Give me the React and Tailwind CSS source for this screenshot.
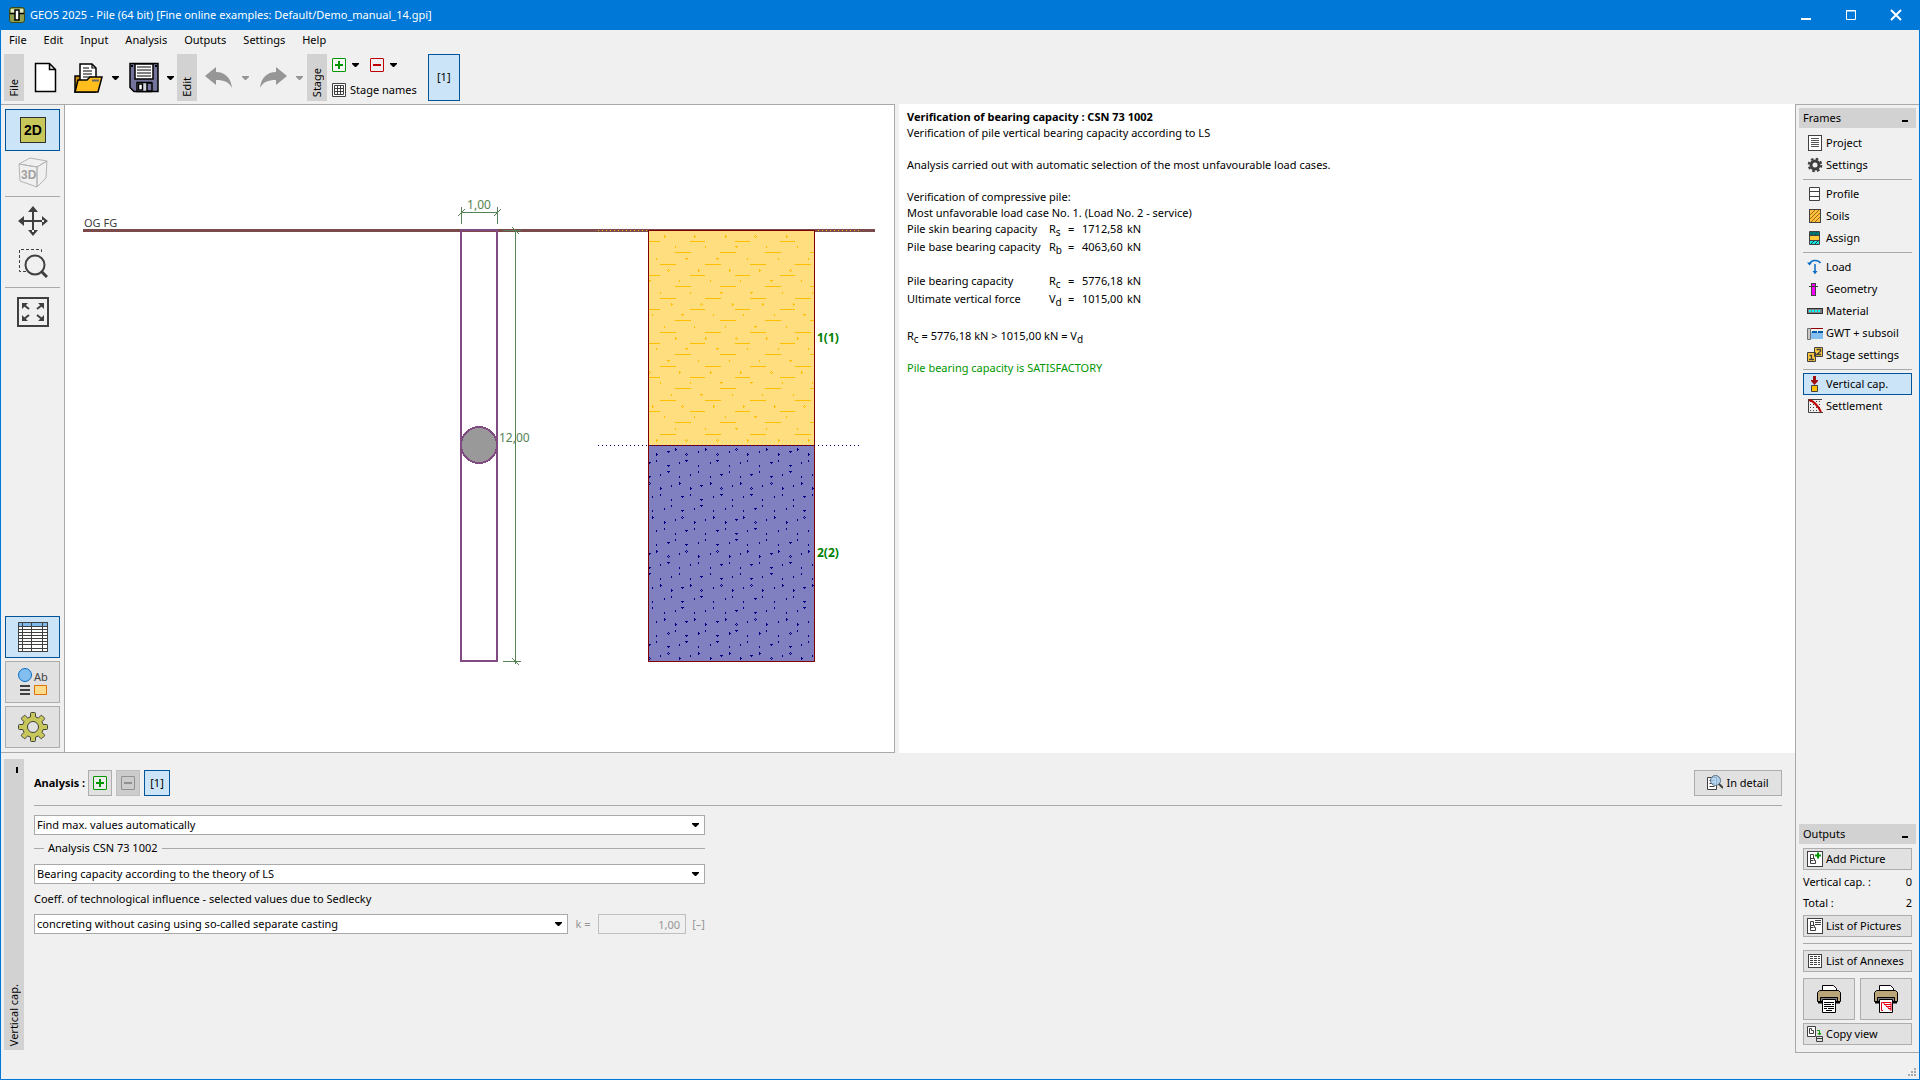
import React, { useState } from 'react';

const FONT = "font-['Noto_Sans','Open_Sans',sans-serif]";

// [row y, first x] of the dot rows, x repeats every ~30px
const CLAY_STARTS = [16, 27, 8, 20, 1, 12, 23, 4];
const SAND_ROWS = [
    [88, 27, 1], [95, 20], [103, 8, 1], [122, 8], [128, 1], [137, 20], [155, 20], [164, 12], [170, 1], [190, 1, 1],
    [197, 23], [205, 12, 1], [224, 12], [230, 4], [239, 23], [257, 23], [266, 16], [272, 4], [292, 4, 1], [299, 27],
    [307, 16, 1], [326, 16], [332, 8], [341, 27], [359, 27], [368, 20], [374, 8], [394, 8, 1], [401, 1], [409, 20, 1],
    [428, 20], [434, 12], [443, 1], [461, 1], [470, 23], [476, 12], [496, 12, 1], [503, 4], [511, 23, 1], [530, 23],
    [536, 16], [545, 4], [563, 4], [572, 27], [578, 16], [598, 16, 1], [605, 8], [613, 27, 1], [632, 27], [640, 20, 1],
    [647, 8], [665, 8], [674, 1], [680, 20], [700, 20, 1], [707, 12], [715, 1, 1],
];
const WIDE_COLUMNS = [1, 20, 35, 39, 54, 69, 73, 88, 103, 107, 122, 141, 156];

const dotPath = (x, y, big, wide) => {
    if (big && wide) return `M${x} ${y - 1}h1v1h-1zM${x - 1} ${y}h1v1h-1zM${x + 1} ${y}h1v1h-1zM${x} ${y + 1}h1v1h-1z`;
    if (big) return `M${x} ${y - 1}h1v3h-1zM${x + 1} ${y}h1v1h-1z`;
    if (wide) return `M${x - 1} ${y - 1}h3v1h-3zM${x} ${y}h1v1h-1z`;
    return `M${x} ${y - 1}h1v2h-1z`;
};

// x is measured from the left edge of the soil column
const rowPath = (y, start, big) => {
    let d = '';
    for (let n = 0; n < 6; n++) {
        const x = start + Math.round(n * 30.4);
        const wide = WIDE_COLUMNS.some((w) => Math.abs(w - x) < 2);
        if (x < 166) d += dotPath(648 + x, y, big, wide);
    }
    return d;
};

const CLAY_DOTS = Array.from({ length: 19 }, (_, k) =>
    rowPath(Math.round(236 + k * 11.33), CLAY_STARTS[k % 8], k % 3 === 0)
).join('');
const SAND_DOTS = SAND_ROWS.map(([y, x, big]) => rowPath(420 + Math.round(y / 3), x, big)).join('');

const Caret = ({ className = '' }) => (
    <svg width="7" height="4" viewBox="0 0 7 4" className={`shrink-0 ${className}`} fill="currentColor">
        <path d="M0 0h7v1L4 4H3L0 1z" />
    </svg>
);

const PlusBox = ({ color = '#009600' }) => (
    <svg width="14" height="14" viewBox="0 0 14 14" fill="none" stroke={color}>
        <rect x=".5" y=".5" width="13" height="13" rx=".5" fill="#fff" fillOpacity=".4" />
        <path d="M3 7h8M7 3v8" strokeWidth="2" />
    </svg>
);

const MinusBox = ({ color = '#c00000' }) => (
    <svg width="14" height="14" viewBox="0 0 14 14" fill="none" stroke={color}>
        <rect x=".5" y=".5" width="13" height="13" rx=".5" />
        <path d="M3 7h8" strokeWidth="2" />
    </svg>
);

const PictureIcon = ({ children }) => (
    <svg width="16" height="16" viewBox="0 0 16 16" fill="none" stroke="#404040">
        <rect x=".5" y=".5" width="15" height="15" fill="#fff" />
        <path d="M3.500 12.500V3.500h3v4M3.500 7.500h4v2h1v3h-5M3.500 9.500h3" />
        {children}
    </svg>
);

const ICONS = {
    project: (
        <svg width="16" height="16" viewBox="0 0 16 16" fill="none" stroke="#404040">
            <rect x="1.500" y=".5" width="13" height="15" fill="#fff" />
            <path d="M4 3.500h8M4 5.500h8M4 7.500h8M4 9.500h8M4 11.500h8" stroke="#555" />
        </svg>
    ),
    settings: (
        <svg width="16" height="16" viewBox="0 0 16 16" fill="none" stroke="#404040">
            <circle cx="8" cy="8" r="4" strokeWidth="3" />
            <circle cx="8" cy="8" r="6.300" strokeWidth="2" strokeDasharray="2.600 2.350" />
        </svg>
    ),
    profile: (
        <svg width="16" height="16" viewBox="0 0 16 16" fill="#fff" stroke="#404040">
            <path d="M2.500 1.500h10v13h-10zM2.500 5.500h10M2.500 10.500h10" />
        </svg>
    ),
    soils: (
        <svg width="16" height="16" viewBox="0 0 16 16" stroke="#404040">
            <rect x="2.500" y="1.500" width="11" height="13" fill="#ffbe3c" />
            <path d="M3 7l5-5M3 11l9-9M4 14l9-9M8 14l5-5" stroke="#9a6a10" />
        </svg>
    ),
    assign: (
        <svg width="16" height="16" viewBox="0 0 16 16">
            <path fill="#007a78" d="M3 2h10v4H3z" />
            <path fill="#ffc83c" d="M3 6h10v4H3z" />
            <path fill="#1ee0e0" d="M3 10h10v4H3z" />
            <path d="M2.500 1.500h10v13h-10zM3 5.500h10M3 10.500h10" fill="none" stroke="#404040" />
            <path d="M4 14l3-3M8 14l3-3M4 5l2-3M8 5l2-3" stroke="#00504e" />
        </svg>
    ),
    load: (
        <svg width="16" height="16" viewBox="0 0 16 16" fill="none" stroke="#0a6cc4" strokeWidth="1.500">
            <path d="M2.500 5C4 .5 11 .3 13.500 4M8 5v9" />
            <path d="M0 3.500h5L2.500 6.500zM5.500 12h5L8 15.200z" fill="#0a6cc4" stroke="none" />
        </svg>
    ),
    geometry: (
        <svg width="16" height="16" viewBox="0 0 16 16" stroke="#404040">
            <rect x="4.500" y="2.500" width="4" height="12" fill="#f0f" />
            <path d="M2 5.500h9" />
        </svg>
    ),
    material: (
        <svg width="16" height="16" viewBox="0 0 16 16">
            <rect x=".5" y="5.500" width="15" height="5" fill="#808080" stroke="#303030" />
            <path d="M2 8h12" stroke="#0ff" strokeWidth="2" strokeDasharray="2 1" />
        </svg>
    ),
    gwt: (
        <svg width="16" height="16" viewBox="0 0 16 16">
            <path fill="#85bff0" d="M4 7h12v7H4z" />
            <path d="M.5 3.500h3v11h-3z" fill="#c8c8c8" stroke="#707070" />
            <path d="M4 3.500h12" stroke="#900000" />
            <path d="M5 7h11" stroke="#005aaa" strokeWidth="2" strokeDasharray="5 1" />
        </svg>
    ),
    stages: (
        <svg width="16" height="16" viewBox="0 0 16 16" stroke="#404040">
            <path d="M.5 5.500h8v9h-8zM7.500 .5h8v9h-8z" fill="#ffc83c" />
            <path d="M2.500 8.500h2v4M2 12.500h5M9.500 2.500h4v2l-4 3h4.500" fill="none" strokeWidth="1.300" />
        </svg>
    ),
    vertical: (
        <svg width="16" height="16" viewBox="0 0 16 16">
            <path d="M6 0h3v4h2v1L7.500 9 4 5V4h2z" fill="#a01010" />
            <path d="M4.500 9.500h6v6h-6z" fill="#ffc000" stroke="#404040" />
        </svg>
    ),
    settlement: (
        <svg width="16" height="16" viewBox="0 0 16 16" fill="none">
            <path d="M3 3.500h12M3 6.500h12M3 9.500h12M3 12.500h12" stroke="#404040" strokeDasharray="1 2" />
            <path d="M1.500 1v13.500H16M2 1.500h13" stroke="#404040" />
            <path d="M2 2c5 1 8 4 12 12" stroke="#c00000" strokeWidth="2" />
        </svg>
    ),
    table: (
        <svg width="14" height="14" viewBox="0 0 14 14" fill="none" stroke="#404040">
            <path d="M.5 .5h13v13H.5z" fill="#fff" />
            <path d="M2.500 2.500h9v9h-9zM5.500 3v9M8.500 3v9M3 5.500h9M3 8.500h9" />
        </svg>
    ),
    addPicture: (
        <PictureIcon>
            <path d="M8 4.500h6M11 1.500v6" stroke="#009600" strokeWidth="2" />
        </PictureIcon>
    ),
    listPictures: (
        <PictureIcon>
            <path d="M8 2.500h6M8 4.500h6M8 6.500h6" />
        </PictureIcon>
    ),
    annexes: (
        <svg width="16" height="16" viewBox="0 0 16 16" fill="none" stroke="#404040">
            <rect x="1.500" y="1.500" width="13" height="13" fill="#fff" />
            <path d="M3 3.500h10M3 5.500h10M3 7.500h10M3 9.500h10M3 11.500h10" strokeDasharray="3 1" />
        </svg>
    ),
    copy: (
        <svg width="16" height="16" viewBox="0 0 16 16" fill="none" stroke="#404040">
            <path d="M.5 .5h8v10h-8z" fill="#fff" />
            <path d="M2.500 7.500v-5h2v2h2v3h-4M9.500 10.500h6v5h-6zM9.500 12.500h6" />
            <path d="M10 4.500h2.500V9M11 7l1.500 2L14 7" stroke="#009600" />
        </svg>
    ),
};

const FRAME_GROUPS = [
    [['project', 'Project'], ['settings', 'Settings']],
    [['profile', 'Profile'], ['soils', 'Soils'], ['assign', 'Assign']],
    [['load', 'Load'], ['geometry', 'Geometry'], ['material', 'Material'], ['gwt', 'GWT + subsoil'], ['stages', 'Stage settings']],
    [['vertical', 'Vertical cap.'], ['settlement', 'Settlement']],
];

const MENU = ['File', 'Edit', 'Input', 'Analysis', 'Outputs', 'Settings', 'Help'];

const TitleBar = () => (
    <header className="h-[30px] shrink-0 bg-[#0078d7] text-white flex items-center pl-2">
        <svg width="16" height="16" viewBox="0 0 16 16" className="mr-[5px]">
            <rect x=".5" y=".5" width="15" height="15" rx="2.500" fill="#8f9f50" stroke="#3c4a18" />
            <path d="M2 2h12v5H2z" fill="#dfe6c0" />
            <path d="M1 6.500h14" stroke="#000" strokeWidth="1.500" />
            <path d="M6 3h4v10H6z" fill="#fff" stroke="#000" strokeWidth="1.500" />
        </svg>
        <h1>GEO5 2025 - Pile (64 bit) [Fine online examples: Default/Demo_manual_14.gpi]</h1>
        <div className="ml-auto mr-px flex">
            <button aria-label="Minimize" className="w-[45px] h-[30px] grid place-items-center">
                <svg width="12" height="12" viewBox="0 0 12 12" fill="none" stroke="#fff">
                    <path d="M1 10h10" strokeWidth="2" />
                </svg>
            </button>
            <button aria-label="Maximize" className="w-[45px] h-[30px] grid place-items-center">
                <svg width="12" height="12" viewBox="0 0 12 12" fill="none" stroke="#fff">
                    <path d="M1.500 1.500h9v9h-9zM1 2h10" />
                </svg>
            </button>
            <button aria-label="Close" className="w-[45px] h-[30px] grid place-items-center">
                <svg width="12" height="12" viewBox="0 0 12 12" fill="none" stroke="#fff">
                    <path d="M1 1l10 10M11 1L1 11" strokeWidth="2" />
                </svg>
            </button>
        </div>
    </header>
);

const GroupTab = ({ children, className = '' }) => (
    <div className={`w-5 shrink-0 bg-[#d2d2d2] flex items-end justify-center pb-1 ${className}`}>
        <span className="[writing-mode:vertical-rl] rotate-180 leading-4">{children}</span>
    </div>
);

const Toolbar = () => (
    <div className="flex h-[47px] mt-1 pl-[3px] shrink-0">
        <GroupTab>File</GroupTab>
        <button aria-label="New" className="ml-[10px] self-center">
            <svg width="24" height="32" viewBox="0 0 24 32" fill="#fff" stroke="#000" strokeWidth="1.500">
                <path d="M1.500 1.500h14l6 6v22h-20zM15.500 1.500v6h6" />
            </svg>
        </button>
        <button aria-label="Open" className="ml-4 self-center flex items-center gap-2">
            <svg width="30" height="32" viewBox="0 0 30 32" strokeWidth="1.500" stroke="#000">
                <path d="M1 14h6l2 2h12v14H1z" fill="#c88a00" />
                <path d="M6 2h12l4 4v14H6z" fill="#fff" />
                <path d="M18 2v4h4M9 6h6M9 9h9M9 12h9M9 15h9" fill="none" strokeWidth="1.200" />
                <path d="M4 18h9l3-3h12l-4 15H1z" fill="#ffbe1e" />
                <path d="M18 18.500h7" stroke="#666" strokeWidth="2" />
            </svg>
            <Caret />
        </button>
        <button aria-label="Save" className="ml-[10px] self-center flex items-center gap-2">
            <svg width="30" height="32" viewBox="0 0 30 32" stroke="#000" strokeWidth="1.500">
                <path d="M1 1.500h28v28H5l-4-4z" fill="#73739b" />
                <path d="M6 2h18v15H6z" fill="#fff" />
                <path d="M8 5h14M8 8h14M8 11h14M8 14h14" strokeWidth="1.200" />
                <path d="M8 20.500h14v9H8z" fill="#d4d4e0" />
                <path d="M9.500 22h4v6h-4z" fill="#fff" />
                <path d="M18 21h5v8h-5z" fill="#73739b" />
                <path d="M2 3h2v2H2zM26 3h2v2h-2z" fill="#000" stroke="none" />
            </svg>
            <Caret />
        </button>
        <GroupTab className="ml-[3px]">Edit</GroupTab>
        <button disabled aria-label="Undo" className="ml-2 self-center flex items-center gap-[9px] text-[#969696]">
            <svg width="28" height="22" viewBox="0 0 28 22" fill="currentColor">
                <path d="M0 9L11 0v5c9 0 15 6 16 16-3-6-8-8-16-8v5z" />
            </svg>
            <Caret />
        </button>
        <button disabled aria-label="Redo" className="ml-[10px] self-center flex items-center gap-[9px] text-[#969696]">
            <svg width="28" height="22" viewBox="0 0 28 22" fill="currentColor">
                <path d="M28 9L17 0v5C8 5 2 11 1 21c3-6 8-8 16-8v5z" />
            </svg>
            <Caret />
        </button>
        <GroupTab className="ml-1">Stage</GroupTab>
        <div className="ml-[5px] flex flex-col justify-between pt-1 pb-[3px]">
            <div className="flex items-center">
                <button aria-label="Add stage" className="flex items-center gap-[6px]"><PlusBox /><Caret /></button>
                <button aria-label="Remove stage" className="ml-[11px] flex items-center gap-[6px]"><MinusBox /><Caret /></button>
            </div>
            <button className="flex items-center gap-1 leading-4">{ICONS.table}Stage names</button>
        </div>
        <button className="ml-[11px] w-8 bg-[#cce4f7] border border-[#005499]">[1]</button>
    </div>
);

const SIDE_ON = 'h-[42px] grid place-items-center bg-[#cce4f7] border border-[#005499]';
const SIDE_OFF = 'h-[42px] grid place-items-center bg-[#e1e1e1] border border-[#adadad]';
const SIDE_PLAIN = 'h-[42px] grid place-items-center';

const ViewBar = () => (
    <nav className="w-[63px] shrink-0 px-1 pt-1 pb-1 flex flex-col">
        <button aria-label="2D view" className={SIDE_ON}>
            <svg width="26" height="26" viewBox="0 0 26 26">
                <rect x=".5" y=".5" width="25" height="25" fill="#c8c85a" stroke="#303030" />
                <text x="13" y="18" textAnchor="middle" fontSize="14" fontWeight="700" fontFamily="Liberation Sans, sans-serif">2D</text>
            </svg>
        </button>
        <button disabled aria-label="3D view" className={SIDE_PLAIN}>
            <svg width="32" height="32" viewBox="0 0 32 32" fill="#f0f0f0" stroke="#b4b4b4">
                <path d="M2 8l11-6 17 3-10 6zM2 8l18 3v20L3 25zM30 5l-10 6v20l9-9z" />
                <text x="4" y="23" fontSize="12" stroke="none" fill="#a0a0a0" fontWeight="700" fontFamily="Liberation Sans, sans-serif">3D</text>
            </svg>
        </button>
        <hr className="my-[3px] border-[#a9a9a9]" />
        <button aria-label="Move" className={SIDE_PLAIN}>
            <svg width="30" height="30" viewBox="0 0 30 30" fill="#404040">
                <path d="M14 4h2v22h-2zM4 14h22v2H4zM15 0l5 6H10zM15 30l5-6H10zM0 15l6-5v10zM30 15l-6-5v10z" />
            </svg>
        </button>
        <button aria-label="Zoom window" className={SIDE_PLAIN}>
            <svg width="30" height="30" viewBox="0 0 30 30" fill="none" stroke="#404040">
                <path d="M8 23.500H1.500v-22h22V6" strokeDasharray="3 2" />
                <circle cx="17" cy="17" r="9.500" strokeWidth="2" />
                <path d="M23 23l6 6" strokeWidth="3" />
            </svg>
        </button>
        <hr className="my-[3px] border-[#a9a9a9]" />
        <button aria-label="Fit view" className={SIDE_PLAIN}>
            <svg width="32" height="30" viewBox="0 0 32 30" fill="none" stroke="#404040">
                <path d="M1 1h30v28H1z" strokeWidth="2" />
                <path d="M5 12V6h6zM21 6h6v6zM5 18v6h6zM27 18v6h-6z" fill="#404040" stroke="none" />
                <path d="M7 8l5 4M25 8l-5 4M7 22l5-4M25 22l-5-4" strokeWidth="2" />
            </svg>
        </button>
        <div className="mt-auto flex flex-col gap-[3px]">
            <button aria-label="Table" className={SIDE_ON}>
                <svg width="30" height="30" viewBox="0 0 30 30" fill="none" stroke="#404040">
                    <path d="M.5 .5h29v29H.5z" fill="#fff" />
                    <path d="M1 1h28v3H1z" fill="#7db9eb" stroke="none" />
                    <path d="M.5 .5h29v29H.5zM4.500 0v30M13.500 0v30M24.500 0v30M0 4.500h30M0 7.500h30M0 10.500h30M0 13.500h30M0 16.500h30M0 19.500h30M0 22.500h30M0 26.500h30" />
                </svg>
            </button>
            <button aria-label="Drawing style" className={SIDE_OFF}>
                <svg width="30" height="30" viewBox="0 0 30 30" fill="none">
                    <circle cx="7" cy="8" r="6.500" fill="#82bef0" stroke="#0a6cc4" />
                    <text x="16" y="14" fontSize="11" fill="#404040" className={FONT}>Ab</text>
                    <path d="M2 19h10M2 23h10M2 27h10" stroke="#404040" strokeWidth="2" />
                    <path d="M16.500 18.500h12v9h-12z" fill="#fadc8c" stroke="#e17000" />
                </svg>
            </button>
            <button aria-label="Preferences" className={SIDE_OFF}>
                <svg width="30" height="30" viewBox="0 0 30 30" fill="none">
                    <path
                        d="M12.500 4.800V1.500Q12.500 .5 13.500 .5h3q1 0 1 1v3.300l2.800 1.200 2.400-2.300q.7-.7 1.400 0l2.200 2.200q.7.700 0 1.400L24 9.700l1.200 2.800h3.300q1 0 1 1v3q0 1-1 1h-3.300L24 20.300l2.300 2.400q.7.700 0 1.400l-2.200 2.200q-.7.700-1.400 0L20.300 24l-2.800 1.200v3.300q0 1-1 1h-3q-1 0-1-1v-3.300L9.700 24l-2.400 2.300q-.7.700-1.400 0l-2.200-2.200q-.7-.7 0-1.400L6 20.300l-1.200-2.800H1.500q-1 0-1-1v-3q0-1 1-1h3.300L6 9.700 3.700 7.300q-.7-.7 0-1.400l2.200-2.200q.7-.7 1.400 0L9.700 6z"
                        fill="#c8c85a"
                        stroke="#404040"
                    />
                    <circle cx="15" cy="15" r="5.500" fill="#e1e1e1" stroke="#404040" />
                </svg>
            </button>
        </div>
    </nav>
);

const PileDrawing = () => (
    <svg viewBox="65 105 829 647" className="block w-full h-full" shapeRendering="crispEdges" fill="none">
        <defs>
            <pattern id="clay" x="648" y="241" width="45" height="34" patternUnits="userSpaceOnUse">
                <path d="M0 0h12v1H0zM42 0h3v1h-3zM27 11h16v1H27zM12 23h16v1H12z" fill="#ffbe00" />
            </pattern>
        </defs>
        <path d="M83 229h792v3H83z" fill="#7b4a4b" />
        <path d="M598 230.500h262" stroke="#ffbe00" strokeDasharray="1 3" />
        <path d="M648 230h167v215H648z" fill="#ffde80" />
        <path d="M648 230h167v215H648z" fill="url(#clay)" />
        <path d={CLAY_DOTS} fill="#ffbe00" />
        <path d="M648 446h167v215H648z" fill="#8080c0" />
        <path d={SAND_DOTS} fill="#000080" />
        <path d="M648.500 230.500h166v431h-166zM648 445.500h167" stroke="#800000" />
        <path d="M598 445.500h262" stroke="#000080" strokeDasharray="1 3" />
        <path d="M461 230h36v431h-36z" stroke="#7f4b80" strokeWidth="2" />
        <circle cx="479" cy="445" r="18" fill="#999" stroke="#7f4b80" strokeWidth="2" />
        <path d="M461.500 207v17M497.500 207v17M461 212.500h37M458 216l7-7M494 216l7-7" stroke="#558355" />
        <path d="M515.500 230v434M503 230.500h18M503 661.500h18M512 227l7 7M512 658l7 7" stroke="#558355" />
        <g className={FONT} fontSize="12" fill="#558355">
            <text x="479" y="209" textAnchor="middle">1,00</text>
            <text x="499" y="442">12,00</text>
            <text x="84" y="227" fontSize="11" fill="#404040">OG FG</text>
            <g fontWeight="700" fill="#008000">
                <text x="817" y="342">1(1)</text>
                <text x="817" y="557">2(2)</text>
            </g>
        </g>
    </svg>
);

const Sub = ({ children }) => <sub className="text-[10px]">{children}</sub>;

const ResultRow = ({ label, sym, sub, value }) => (
    <tr className="h-[18px]">
        <td className="p-0 w-[142px]">{label}</td>
        <td className="p-0 w-[19px]">{sym}<Sub>{sub}</Sub></td>
        <td className="p-0 w-[14px]">=</td>
        <td className="p-0 w-[45px]">{value}</td>
        <td className="p-0">kN</td>
    </tr>
);

const Report = () => (
    <section className="flex-1 bg-white pl-2 pt-[5px] leading-4 overflow-hidden">
        <h2 className="font-bold">Verification of bearing capacity : CSN 73 1002</h2>
        <p>Verification of pile vertical bearing capacity according to LS</p>
        <p className="mt-4">Analysis carried out with automatic selection of the most unfavourable load cases.</p>
        <p className="mt-4">Verification of compressive pile:</p>
        <p>Most unfavorable load case No. 1. (Load No. 2 - service)</p>
        <table className="border-collapse -mt-px">
            <tbody>
                <ResultRow label="Pile skin bearing capacity" sym="R" sub="s" value="1712,58" />
                <ResultRow label="Pile base bearing capacity" sym="R" sub="b" value="4063,60" />
            </tbody>
        </table>
        <table className="border-collapse mt-4">
            <tbody>
                <ResultRow label="Pile bearing capacity" sym="R" sub="c" value="5776,18" />
                <ResultRow label="Ultimate vertical force" sym="V" sub="d" value="1015,00" />
            </tbody>
        </table>
        <p className="mt-5">R<Sub>c</Sub> = 5776,18 kN &gt; 1015,00 kN = V<Sub>d</Sub></p>
        <p className="mt-4 text-[#009600]">Pile bearing capacity is SATISFACTORY</p>
    </section>
);

const SelectBox = ({ label, value, className = '' }) => (
    <div className={`relative ${className}`}>
        <select aria-label={label} defaultValue={value} className="appearance-none w-full h-5 bg-white border border-[#a9a9a9] pl-[2px] leading-4">
            <option>{value}</option>
        </select>
        <Caret className="absolute right-[6px] top-2 pointer-events-none" />
    </div>
);

const AnalysisPanel = () => (
    <section className="flex h-[326px] shrink-0">
        <div className="ml-[3px] mt-[6px] w-5 h-[291px] shrink-0 bg-[#d2d2d2] flex flex-col items-center justify-between pt-2 pb-1">
            <button aria-label="Collapse" className="w-[2px] h-[6px] ml-1.5 bg-black" />
            <span className="[writing-mode:vertical-rl] rotate-180 leading-4">Vertical cap.</span>
        </div>
        <div className="flex-1 ml-[10px] mr-[13px] pt-[17px]">
            <div className="flex items-center h-[26px]">
                <span className="w-[54px] font-bold whitespace-nowrap">Analysis :</span>
                <button aria-label="Add analysis" className="w-6 h-[26px] grid place-items-center bg-[#e1e1e1] border border-[#adadad]"><PlusBox /></button>
                <button disabled aria-label="Remove analysis" className="ml-1 w-6 h-[26px] grid place-items-center bg-[#ccc] border border-[#bfbfbf]"><MinusBox color="#919191" /></button>
                <button className="ml-1 w-[26px] h-[26px] bg-[#cce4f7] border border-[#005499]">[1]</button>
                <button className="ml-auto w-[88px] h-[26px] bg-[#e1e1e1] border border-[#adadad] flex items-center justify-center gap-[3px]">
                    <svg width="16" height="16" viewBox="0 0 16 16" fill="none" stroke="#404040">
                        <path d="M.5 2.500h9v12h-9z" fill="#fff" />
                        <path d="M2.500 5.500h5M2.500 8.500h5M2.500 11.500h5" />
                        <circle cx="8.500" cy="5.500" r="5" fill="#a5cdf0" fillOpacity=".8" stroke="#5a6e82" />
                        <path d="M12 9l4 4" strokeWidth="2" />
                    </svg>
                    In detail
                </button>
            </div>
            <hr className="mt-[9px] border-[#a9a9a9]" />
            <div className="w-[671px] mt-[9px]">
                <SelectBox label="Values" value="Find max. values automatically" />
                <div className="mt-[5px] flex items-center h-4 whitespace-nowrap">
                    <span className="w-[10px] h-px bg-[#a9a9a9] mr-1" />
                    Analysis CSN 73 1002
                    <span className="flex-1 h-px bg-[#a9a9a9] ml-1" />
                </div>
                <SelectBox label="Method" value="Bearing capacity according to the theory of LS" className="mt-2" />
                <p className="mt-[7px] leading-4">Coeff. of technological influence - selected values due to Sedlecky</p>
                <div className="mt-[7px] flex items-center">
                    <SelectBox label="Technology" value="concreting without casing using so-called separate casting" className="w-[534px]" />
                    <label htmlFor="k" className="w-[30px] text-center text-[#969696]">k =</label>
                    <input id="k" disabled defaultValue="1,00" className="w-[88px] h-5 border border-[#bfbfbf] bg-[#f0f0f0] px-[5px] text-right text-[#969696]" />
                    <span className="ml-auto text-[#969696]">[–]</span>
                </div>
            </div>
        </div>
    </section>
);

const PanelHeader = ({ children }) => (
    <div className="mx-[3px] h-5 bg-[#d2d2d2] flex items-center justify-between pl-1 pr-2">
        {children}
        <button aria-label={`Collapse ${children}`} className="w-[6px] h-[2px] mt-1.5 bg-black" />
    </div>
);

const FramesPanel = () => {
    const [active, setActive] = useState('vertical');
    return (
        <section className="pt-[3px]">
            <PanelHeader>Frames</PanelHeader>
            <div className="mt-1 px-[7px]">
                {FRAME_GROUPS.map((group, i) => (
                    <div key={i}>
                        {i > 0 && <hr className="my-[3px] border-[#a9a9a9]" />}
                        {group.map(([id, label]) => (
                            <button
                                key={id}
                                onClick={() => setActive(id)}
                                className={`w-full h-[22px] flex items-center gap-[3px] pl-[3px] border whitespace-nowrap ${active === id ? 'bg-[#cce4f7] border-[#005499]' : 'border-transparent'}`}
                            >
                                {ICONS[id]}
                                {label}
                            </button>
                        ))}
                    </div>
                ))}
            </div>
        </section>
    );
};

const OutputButton = ({ icon, children, className = '' }) => (
    <button className={`w-full h-[22px] flex items-center gap-[3px] pl-[3px] bg-[#e1e1e1] border border-[#adadad] whitespace-nowrap ${className}`}>
        {ICONS[icon]}
        {children}
    </button>
);

const PrinterButton = ({ label, children }) => (
    <button aria-label={label} className="w-[52px] h-[42px] grid place-items-center bg-[#e1e1e1] border border-[#adadad]">
        <svg width="24" height="30" viewBox="0 0 24 30" stroke="#000" fill="none">
            <path d="M5.500 7V1.500h11l3 3V7" fill="#fff" />
            <path d="M2.500 6.500h19l2 2v9h-23v-9z" fill="#b9a578" />
            <path d="M3.500 13.500h17v4h-17z" fill="#808080" />
            <path d="M5.500 15.500h13v13h-13z" fill="#fff" />
            <path d="M1 18.500h4M19 18.500h4" strokeWidth="2" />
            {children}
        </svg>
    </button>
);

const OutputsPanel = () => (
    <section className="mt-auto pb-[7px]">
        <PanelHeader>Outputs</PanelHeader>
        <div className="mt-1 px-[7px]">
            <OutputButton icon="addPicture">Add Picture</OutputButton>
            <div className="flex justify-between h-[21px] items-center mt-[2px]"><span>Vertical cap. :</span><span>0</span></div>
            <div className="flex justify-between h-[21px] items-center"><span>Total :</span><span>2</span></div>
            <OutputButton icon="listPictures" className="mt-px">List of Pictures</OutputButton>
            <hr className="my-[6px] border-[#a9a9a9]" />
            <OutputButton icon="annexes">List of Annexes</OutputButton>
            <div className="flex justify-between mt-[6px] mb-[3px]">
                <PrinterButton label="Print report">
                    <path d="M7 18.500h10M7 20.500h7M15 20.500h2M7 22.500h10M7 24.500h3M11 24.500h6M9 26.500h6" />
                </PrinterButton>
                <PrinterButton label="Print drawing">
                    <path d="M9 18.500H7.500v8H9M9 18.500h8v8zM10 20.500h7M12 22.500h5M14 24.500h3" stroke="#e60014" />
                </PrinterButton>
            </div>
            <OutputButton icon="copy">Copy view</OutputButton>
        </div>
    </section>
);

export default function App() {
    return (
        <div className={`relative h-screen flex flex-col bg-[#f0f0f0] border border-t-0 border-[#0078d7] text-[11px] text-black overflow-hidden ${FONT}`}>
            <TitleBar />
            <nav className="h-5 shrink-0 flex items-center pl-2 gap-[17px]">
                {MENU.map((item) => (
                    <button key={item}>{item}</button>
                ))}
            </nav>
            <Toolbar />
            <main className="flex-1 flex min-h-0 mt-[3px]">
                <div className="flex-1 flex flex-col min-w-0">
                    <div className="flex-1 flex min-h-0">
                        <div className="flex w-[894px] shrink-0 border-y border-r border-[#a9a9a9]">
                            <ViewBar />
                            <div className="flex-1 bg-white border-l border-[#a9a9a9]">
                                <PileDrawing />
                            </div>
                        </div>
                        <div className="flex-1 flex pl-1">
                            <Report />
                        </div>
                    </div>
                    <AnalysisPanel />
                </div>
                <aside className="w-[124px] shrink-0 mb-[26px] flex flex-col border-y border-l border-[#a9a9a9]">
                    <FramesPanel />
                    <OutputsPanel />
                </aside>
            </main>
            <svg width="9" height="9" viewBox="0 0 9 9" className="absolute right-[2px] bottom-[2px]" fill="#a9a9a9">
                <path d="M6 0h2v2H6zM3 3h2v2H3zM6 3h2v2H6zM0 6h2v2H0zM3 6h2v2H3zM6 6h2v2H6z" />
            </svg>
        </div>
    );
}
